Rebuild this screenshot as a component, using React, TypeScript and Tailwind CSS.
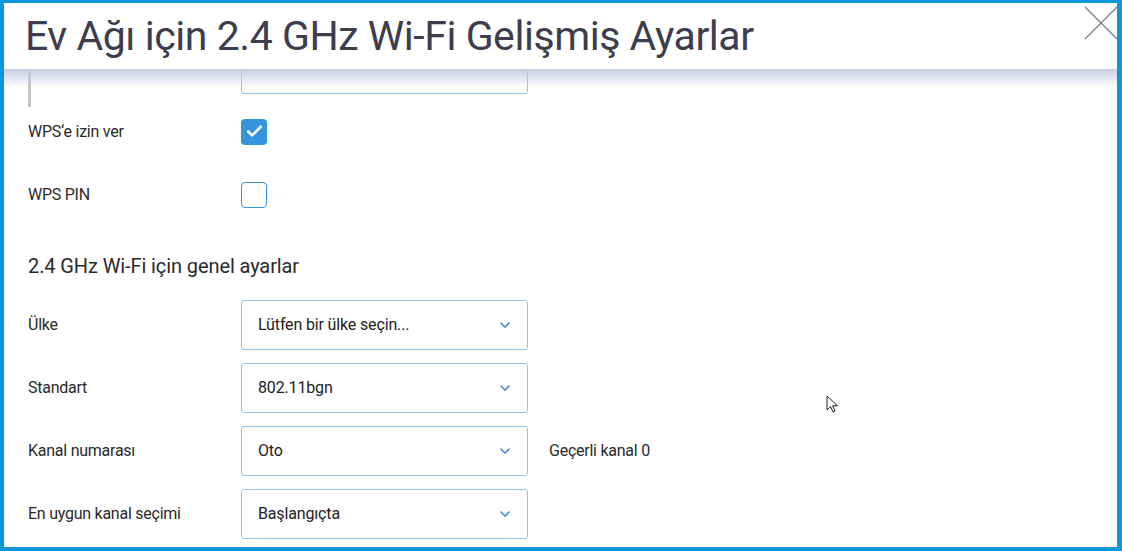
import { Check } from 'lucide-react';

const font = { fontFamily: 'Roboto, "Noto Sans", sans-serif' };

type SelectProps = { value: string };

const Select = ({ value }: SelectProps) => (
  <div className="flex h-[50px] w-[287px] items-center justify-between rounded-[3px] border border-[#8fc5ec] bg-white pl-[16px] pr-[16px]">
    <span className="text-[16px] tracking-[-0.15px] text-[#222]">{value}</span>
    <svg width="12" height="8" viewBox="0 0 12 8">
      <path d="M1.5 1.5 L6 6 L10.5 1.5" stroke="#4a8fd6" strokeWidth="1.6" fill="none" />
    </svg>
  </div>
);

const Row = ({ label, children }: { label: string; children: React.ReactNode }) => (
  <div className="flex h-[63px] items-center">
    <div className="w-[213px] text-[16px] tracking-[-0.25px] text-[#2a2a2a]">{label}</div>
    {children}
  </div>
);

export default function App() {
  return (
    <div
      className="relative h-[551px] w-[1122px] overflow-hidden border-b-[4px] border-l-[4px] border-r-[5px] border-t-[3px] border-[#0b97dc] bg-white"
      style={font}
    >
      {/* header */}
      <div className="relative z-10 flex h-[66px] items-center bg-white pl-[21px]">
        <h1 className="text-[41px] leading-none tracking-[-0.45px] text-[#3d3d4d]">
          Ev Ağı için 2.4 GHz Wi-Fi Gelişmiş Ayarlar
        </h1>
        <svg className="absolute right-[-1px] top-[3px]" width="34" height="34" viewBox="0 0 34 34">
          <path d="M1 1 L33 33 M33 1 L1 33" stroke="#7c7c88" strokeWidth="1.3" fill="none" />
        </svg>
        <div className="absolute left-0 right-0 top-full h-[18px] bg-gradient-to-b from-[#c6cbe0] to-white/0" />
      </div>

      {/* scrolled content */}
      <div className="-mt-[32px] px-6">
        <div className="relative flex h-[63px] items-center">
          <div className="absolute left-0 top-0 h-[70px] w-[3px] bg-[#c4c4c8]" />
          <div className="ml-[213px] h-[50px] w-[287px] rounded-[3px] border border-[#8fc5ec]" />
        </div>

        <Row label="WPS‘e izin ver">
          <div className="flex h-[26px] w-[26px] items-center justify-center rounded-[4px] bg-[#3595dc]">
            <Check className="h-[19px] w-[19px] text-white" strokeWidth={3.2} />
          </div>
        </Row>

        <Row label="WPS PIN">
          <div className="h-[26px] w-[26px] rounded-[4px] border border-[#3595dc] bg-white" />
        </Row>

        <div className="h-[67px] pt-[28px] text-[20px] leading-[24px] tracking-[-0.1px] text-[#2a2a2a]">
          2.4 GHz Wi-Fi için genel ayarlar
        </div>

        <Row label="Ülke">
          <Select value="Lütfen bir ülke seçin..." />
        </Row>
        <Row label="Standart">
          <Select value="802.11bgn" />
        </Row>
        <Row label="Kanal numarası">
          <Select value="Oto" />
          <span className="ml-[21px] text-[16px] tracking-[-0.25px] text-[#2a2a2a]">Geçerli kanal 0</span>
        </Row>
        <Row label="En uygun kanal seçimi">
          <Select value="Başlangıçta" />
        </Row>
      </div>

      {/* mouse pointer */}
      <svg className="absolute left-[822px] top-[392px]" width="14" height="20" viewBox="0 0 14 20">
        <path d="M1 1 L1 15 L4.5 11.5 L7 17 L9 16 L6.6 10.8 L11.5 10.8 Z" fill="white" stroke="#222" strokeWidth="1" />
      </svg>
    </div>
  );
}
